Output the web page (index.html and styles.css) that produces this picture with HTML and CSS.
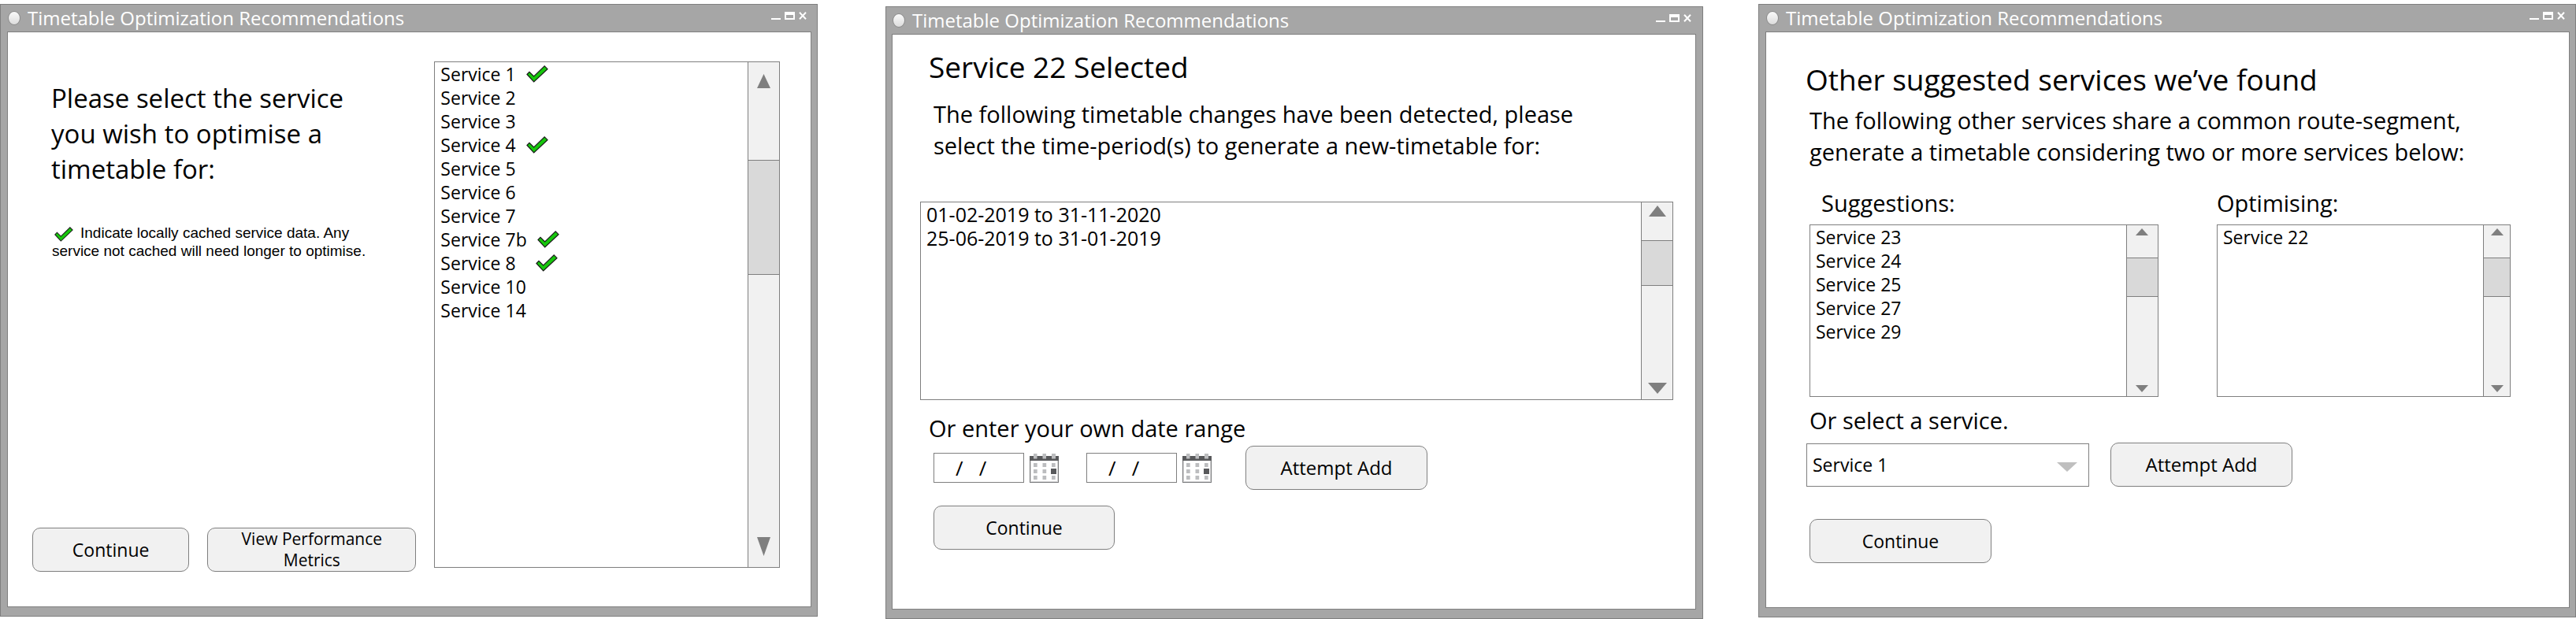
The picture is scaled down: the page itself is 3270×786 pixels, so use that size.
FILE: index.html
```html
<!DOCTYPE html>
<html lang="en">
<head>
<meta charset="utf-8">
<title>Timetable Optimization Recommendations</title>
<link rel="stylesheet" href="styles.css">
</head>
<body>
<svg class="sprite" aria-hidden="true">
  <symbol id="tick" viewBox="0 0 28 22"><path d="M1 11.5 4 8.3 9.7 14 23.2.9 27 4.7 9.7 21Z" fill="#16c60c" stroke="#1a1a1a" stroke-width="1.2"/></symbol>
  <symbol id="calendar" viewBox="0 0 37 37">
    <rect x=".5" y="4.500" width="36" height="32" fill="#fff" stroke="#77787a"/>
    <path d="M1.500 9v26.500H35.500V9" fill="none" stroke="#d9d9d9"/>
    <path d="M0 3h37v6H0z" fill="#58595b"/>
    <path d="M5 0h4.500v6.500H5zM16.500 0H21v6.500h-4.500zM28 0h5v6.500h-5zM5 12h4.700v5H5zM16.500 12h4.700v5h-4.700zM28 12h4.700v5H28zM5 20h4.700v5H5zM16.500 20h4.700v5h-4.700zM5 28h4.700v5H5zM16.500 28h4.700v5h-4.700zM28 28h4.700v5H28z" fill="#bcbdbf"/>
    <path d="M27 19h7v7h-7z" fill="#58595b"/>
  </symbol>
  <symbol id="minimise" viewBox="0 0 12 10"><path d="M0 8h12v2H0z" fill="#fff"/></symbol>
  <symbol id="maximise" viewBox="0 0 13 10"><path fill-rule="evenodd" d="M0 0h13v10H0zM2 4v4h9V4z" fill="#fff"/></symbol>
  <symbol id="close" viewBox="0 0 10 10"><path d="M1 .8 9 9.200M9 .8 1 9.200" stroke="#fff" stroke-width="2"/></symbol>
  <symbol id="up" viewBox="0 0 10 10" preserveAspectRatio="none"><path d="M0 10 5 0l5 10z" fill="#7f7f7f"/></symbol>
  <symbol id="down" viewBox="0 0 10 10" preserveAspectRatio="none"><path d="M0 0h10L5 10z" fill="#7f7f7f"/></symbol>
</svg>

<main class="desktop">
  <section class="window">
    <header class="titlebar">
      <span class="orb"></span>
      <h1 class="title">Timetable Optimization Recommendations</h1>
      <div class="controls">
        <button type="button" aria-label="Minimise"><svg width="12" height="10"><use href="#minimise"/></svg></button>
        <button type="button" aria-label="Maximise"><svg width="13" height="10"><use href="#maximise"/></svg></button>
        <button type="button" aria-label="Close"><svg width="10" height="10"><use href="#close"/></svg></button>
      </div>
    </header>
    <div class="pane pane-choose">
      <div class="choose">
        <h2 class="prompt">Please select the service<br>you wish to optimise a<br>timetable for:</h2>
        <p class="note"><svg class="note-tick" width="24" height="19"><use href="#tick"/></svg>Indicate locally cached service data. Any<br>service not cached will need longer to optimise.</p>
        <div class="choose-actions">
          <button type="button" class="btn choose-continue">Continue</button>
          <button type="button" class="btn choose-metrics">View Performance<br>Metrics</button>
        </div>
      </div>
      <div class="listbox listbox-tall">
        <ul class="items" role="listbox" aria-label="Services">
          <li role="option">Service 1<svg class="tick" width="28" height="22"><use href="#tick"/></svg></li>
          <li role="option">Service 2</li>
          <li role="option">Service 3</li>
          <li role="option">Service 4<svg class="tick" width="28" height="22"><use href="#tick"/></svg></li>
          <li role="option">Service 5</li>
          <li role="option">Service 6</li>
          <li role="option">Service 7</li>
          <li role="option">Service 7b<svg class="tick" width="28" height="22"><use href="#tick"/></svg></li>
          <li role="option">Service 8&nbsp;&nbsp;<svg class="tick" width="28" height="22"><use href="#tick"/></svg></li>
          <li role="option">Service 10</li>
          <li role="option">Service 14</li>
        </ul>
        <div class="scroll scroll-tall" aria-hidden="true">
          <div class="track"><svg class="arrow-up"><use href="#up"/></svg></div>
          <div class="thumb"></div>
          <div class="track track-end"><svg class="arrow-down"><use href="#down"/></svg></div>
        </div>
      </div>
    </div>
  </section>

  <section class="window window-middle">
    <header class="titlebar">
      <span class="orb"></span>
      <h1 class="title">Timetable Optimization Recommendations</h1>
      <div class="controls">
        <button type="button" aria-label="Minimise"><svg width="12" height="10"><use href="#minimise"/></svg></button>
        <button type="button" aria-label="Maximise"><svg width="13" height="10"><use href="#maximise"/></svg></button>
        <button type="button" aria-label="Close"><svg width="10" height="10"><use href="#close"/></svg></button>
      </div>
    </header>
    <div class="pane pane-periods">
      <h2 class="heading">Service 22 Selected</h2>
      <p class="lead">The following timetable changes have been detected, please<br>select the time-period(s) to generate a new-timetable for:</p>
      <div class="listbox listbox-periods">
        <ul class="items items-dates" role="listbox" aria-label="Time periods">
          <li role="option">01-02-2019 to 31-11-2020</li>
          <li role="option">25-06-2019 to 31-01-2019</li>
        </ul>
        <div class="scroll scroll-periods" aria-hidden="true">
          <div class="track"><svg class="arrow-up"><use href="#up"/></svg></div>
          <div class="thumb"></div>
          <div class="track track-end"><svg class="arrow-down"><use href="#down"/></svg></div>
        </div>
      </div>
      <label class="label label-range" for="from">Or enter your own date range</label>
      <div class="range">
        <div class="date"><input id="from" type="text" value="/   /"><button type="button" aria-label="Pick start date"><svg width="37" height="37"><use href="#calendar"/></svg></button></div>
        <div class="date"><input type="text" value="/   /" aria-label="End date"><button type="button" aria-label="Pick end date"><svg width="37" height="37"><use href="#calendar"/></svg></button></div>
        <button type="button" class="btn btn-add">Attempt Add</button>
      </div>
      <button type="button" class="btn periods-continue">Continue</button>
    </div>
  </section>

  <section class="window window-last">
    <header class="titlebar">
      <span class="orb"></span>
      <h1 class="title">Timetable Optimization Recommendations</h1>
      <div class="controls">
        <button type="button" aria-label="Minimise"><svg width="12" height="10"><use href="#minimise"/></svg></button>
        <button type="button" aria-label="Maximise"><svg width="13" height="10"><use href="#maximise"/></svg></button>
        <button type="button" aria-label="Close"><svg width="10" height="10"><use href="#close"/></svg></button>
      </div>
    </header>
    <div class="pane pane-suggest">
      <h2 class="heading">Other suggested services we’ve found</h2>
      <p class="lead">The following other services share a common route-segment,<br>generate a timetable considering two or more services below:</p>
      <div class="lists">
        <div class="list-group">
          <h3 class="label label-indent" id="suggestions">Suggestions:</h3>
          <div class="listbox listbox-short">
            <ul class="items" role="listbox" aria-labelledby="suggestions">
              <li role="option">Service 23</li>
              <li role="option">Service 24</li>
              <li role="option">Service 25</li>
              <li role="option">Service 27</li>
              <li role="option">Service 29</li>
            </ul>
            <div class="scroll scroll-short" aria-hidden="true">
              <div class="track"><svg class="arrow-up"><use href="#up"/></svg></div>
              <div class="thumb"></div>
              <div class="track track-end"><svg class="arrow-down"><use href="#down"/></svg></div>
            </div>
          </div>
        </div>
        <div class="list-group">
          <h3 class="label" id="optimising">Optimising:</h3>
          <div class="listbox listbox-short">
            <ul class="items" role="listbox" aria-labelledby="optimising">
              <li role="option">Service 22</li>
            </ul>
            <div class="scroll scroll-short scroll-narrow" aria-hidden="true">
              <div class="track"><svg class="arrow-up"><use href="#up"/></svg></div>
              <div class="thumb"></div>
              <div class="track track-end"><svg class="arrow-down"><use href="#down"/></svg></div>
            </div>
          </div>
        </div>
      </div>
      <label class="label label-service" for="service">Or select a service.</label>
      <div class="pick">
        <div class="dropdown">
          <select id="service"><option>Service 1</option><option>Service 2</option><option>Service 3</option></select>
          <svg class="caret" width="26" height="12" aria-hidden="true"><path d="M0 0h26L13 12z" fill="#bfbfbf"/></svg>
        </div>
        <button type="button" class="btn btn-add">Attempt Add</button>
      </div>
      <button type="button" class="btn suggest-continue">Continue</button>
    </div>
  </section>
</main>
</body>
</html>
```

FILE: styles.css
```css
:root {
  --line: #7f7f7f;
  --chrome: #a6a6a6;
  --face: #f1f1f1;
  --thumb: #d9d9d9;
}

* { box-sizing: border-box; }

body {
  margin: 0;
  background: #fff;
  color: #000;
  font: 23px/30px "Open Sans", "Noto Sans", sans-serif;
}

h1, h2, h3, p, ul { margin: 0; padding: 0; font-weight: 400; }
ul { list-style: none; }
button, input, select { font: inherit; color: inherit; margin: 0; }
.sprite { display: none; }

.desktop {
  display: flex;
  align-items: flex-start;
  padding-top: 5px;
}

/* Window chrome */
.window {
  flex: 1 1 0;
  min-width: 0;
  padding: 0 7px 11px 8px;
  border: 1px solid var(--line);
  background: var(--chrome);
}
.window-middle { margin: 3px 70px 0 86px; padding: 0 8px 11px 7px; }

.titlebar {
  display: flex;
  align-items: center;
  gap: 9px;
  height: 34px;
  padding: 0 6px 0 1px;
}
.orb {
  width: 16px;
  height: 18px;
  border: 1px solid #8c8c8c;
  border-radius: 50%;
  background: linear-gradient(#fafafa, #dcdcdc);
}
.title { flex: 1; color: #fff; font-size: 24px; line-height: 34px; }
.controls { display: flex; align-self: flex-start; gap: 5px; padding-top: 9px; }
.controls button { display: block; padding: 0; border: 0; background: none; line-height: 0; }

.pane { border: 1px solid var(--line); background: #fff; }

/* Buttons */
.btn {
  height: 56px;
  padding: 0;
  border: 1px solid var(--line);
  border-radius: 10px;
  background: var(--face);
}
.btn-add { width: 231px; font-size: 24px; }

/* List boxes */
.listbox { display: flex; border: 1px solid var(--line); background: #fff; }
.items { flex: 1; min-width: 0; padding-left: 7px; }
.items li { display: flex; align-items: center; height: 30px; white-space: nowrap; }
.items-dates { font-size: 25px; }
.tick { margin-left: 13px; }

.scroll {
  display: flex;
  flex-direction: column;
  width: 40px;
  border-left: 1px solid var(--line);
  background: var(--face);
}
.track { display: flex; justify-content: center; align-items: flex-start; }
.track-end { flex: 1; align-items: flex-end; }
.thumb {
  border: solid var(--line);
  border-width: 1px 0;
  background: var(--thumb);
}
.listbox-tall { min-height: 643px; margin-bottom: 5px; }
.scroll-tall .track:first-child { height: 124px; padding-top: 15px; }
.scroll-tall .thumb { height: 146px; }
.scroll-tall .track-end { padding-bottom: 14px; }
.scroll-tall .arrow-up { width: 17px; height: 18px; }
.scroll-tall .arrow-down { width: 17px; height: 24px; }

.listbox-periods { min-height: 252px; }
.scroll-periods .track:first-child { height: 48px; padding-top: 4px; }
.scroll-periods .thumb { height: 58px; }
.scroll-periods .track-end { padding-bottom: 7px; }
.scroll-periods .arrow-up { width: 22px; height: 14px; }
.scroll-periods .arrow-down { width: 24px; height: 14px; }

.listbox-short { min-height: 219px; }
.scroll-short .track:first-child { height: 41px; padding-top: 4px; }
.scroll-short .thumb { height: 50px; }
.scroll-short .track-end { padding-bottom: 5px; }
.scroll-short .arrow-up,
.scroll-short .arrow-down { width: 16px; height: 9px; }
.scroll-narrow { width: 34px; }

/* Text */
.heading { font-size: 37px; line-height: 50px; }
.lead, .label { font-size: 29px; line-height: 40px; }
.label { display: block; }

/* Service choice */
.pane-choose {
  display: grid;
  grid-template-columns: 10fr 9fr;
  gap: 23px;
  padding: 37px 39px 44px 31px;
}
.choose { display: flex; flex-direction: column; padding-top: 24px; }
.prompt { padding-left: 24px; font-size: 33px; line-height: 45px; }
.note {
  padding: 47px 0 0 25px;
  font: 19px/23px "Liberation Sans", Arial, sans-serif;
}
.note-tick { margin: 0 9px 0 3px; vertical-align: bottom; }
.choose-actions { display: flex; align-items: center; gap: 23px; margin-top: auto; }
.choose-continue { flex: 3; }
.choose-metrics { flex: 4; font-size: 21px; line-height: 27px; }

/* Time periods */
.pane-periods { padding: 16px 28px 75px 35px; }
.pane-periods .heading { padding-left: 11px; }
.pane-periods .lead { padding: 15px 0 0 17px; }
.listbox-periods { margin-top: 51px; }
.label-range { padding: 16px 0 0 11px; }
.range { display: flex; align-items: center; padding: 2px 0 0 17px; }
.date { display: flex; align-items: center; gap: 7px; margin-right: 35px; }
.date + .date { margin-right: 43px; }
.date input {
  width: 115px;
  height: 38px;
  padding: 0 0 0 27px;
  border: 1px solid var(--line);
  font-size: 26px;
}
.date button { padding: 0; border: 0; background: none; line-height: 0; }
.periods-continue { width: 230px; margin: 20px 0 0 17px; }

/* Suggestions */
.pane-suggest { padding: 35px 74px 56px 50px; }
.pane-suggest .lead { padding: 7px 0 0 5px; white-space: nowrap; }
.lists {
  display: grid;
  grid-template-columns: 19fr 16fr;
  gap: 74px;
  padding: 25px 0 0 5px;
}
.listbox-short { margin-top: 7px; }
.label-indent { padding-left: 15px; }
.label-service { padding: 10px 0 0 5px; }
.pick { display: flex; align-items: center; gap: 27px; padding: 8px 0 0 1px; }
.dropdown { position: relative; width: 359px; }
.dropdown select {
  width: 100%;
  height: 55px;
  padding: 0 7px;
  border: 1px solid var(--line);
  border-radius: 0;
  background: #fff;
  appearance: none;
}
.caret { position: absolute; top: 24px; right: 15px; pointer-events: none; }
.suggest-continue { width: 231px; margin: 41px 0 0 5px; }
```
